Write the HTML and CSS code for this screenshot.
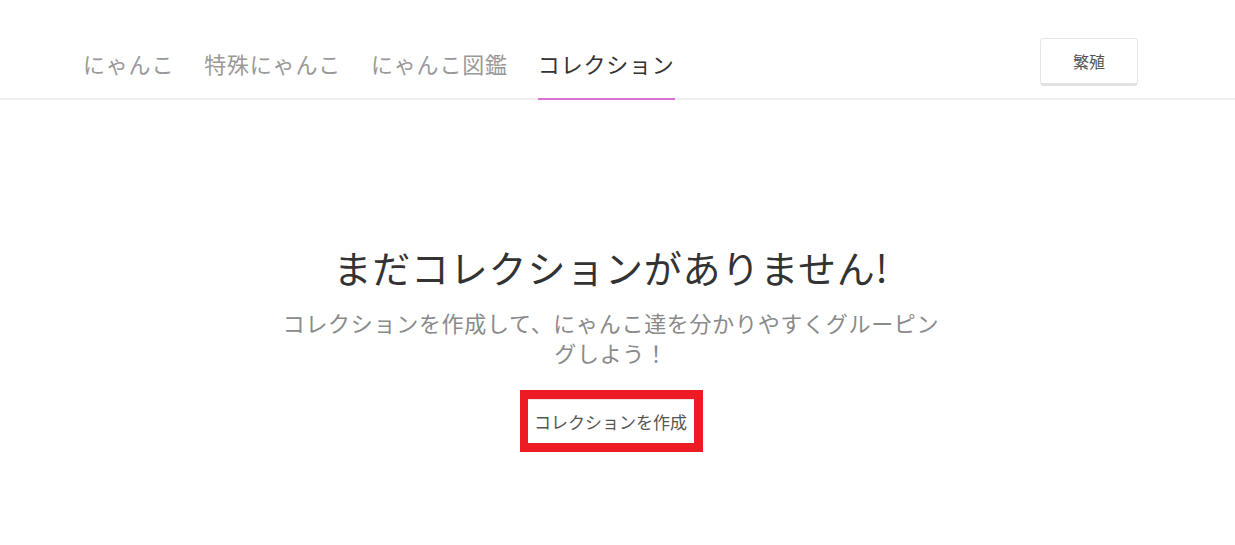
FILE: index.html
```html
<!DOCTYPE html>
<html lang="ja">
<head>
<meta charset="utf-8">
<title>コレクション</title>
<link rel="stylesheet" href="styles.css">
</head>
<body>
<header class="header">
  <div class="header-inner">
    <nav class="tabs">
      <a class="tab">にゃんこ</a>
      <a class="tab">特殊にゃんこ</a>
      <a class="tab">にゃんこ図鑑</a>
      <a class="tab tab-active">コレクション</a>
    </nav>
    <button class="breed-btn">繁殖</button>
  </div>
</header>
<main class="main">
  <h1 class="title">まだコレクションがありません!</h1>
  <p class="subtitle">コレクションを作成して、にゃんこ達を分かりやすくグルーピングしよう！</p>
  <div class="highlight">
    <button class="create-btn">コレクションを作成</button>
  </div>
</main>
</body>
</html>
```
FILE: styles.css
```css
* { box-sizing: border-box; }
html, body {
  margin: 0;
  padding: 0;
  background: #fff;
  font-family: "Noto Sans CJK JP", "Noto Sans", sans-serif;
}
.header {
  border-bottom: 2px solid #eeeeee;
}
.header-inner {
  display: flex;
  align-items: flex-end;
  height: 98px;
  padding: 0 97px 0 83px;
}
.tabs {
  display: flex;
  gap: 30px;
}
.tab {
  display: block;
  font-size: 22px;
  line-height: 30px;
  letter-spacing: 0.8px;
  padding-bottom: 20px;
  color: #999;
  border-bottom: 2px solid transparent;
  margin-bottom: -2px;
  white-space: nowrap;
}
.tab-active {
  color: #333;
  border-bottom-color: #da70d6;
}
.breed-btn {
  margin-left: auto;
  margin-bottom: 12px;
  width: 98px;
  height: 48px;
  background: #fff;
  border: 1px solid #e6e6e6;
  border-bottom: 3px solid #e2e2e2;
  border-radius: 4px;
  font-family: inherit;
  font-size: 16px;
  color: #555;
  padding: 0;
}
.main {
  display: flex;
  flex-direction: column;
  align-items: center;
  padding: 143px 97px 0 84px;
}
.title {
  margin: 0;
  font-size: 38px;
  line-height: 48px;
  letter-spacing: 0.8px;
  font-weight: 400;
  color: #333;
}
.subtitle {
  margin: 16px 0 0;
  max-width: 672px;
  text-align: center;
  font-size: 22px;
  line-height: 30px;
  letter-spacing: 0.7px;
  color: #8a8a8a;
}
.highlight {
  margin-top: 23px;
  border: 9px solid #ed1c24;
  border-left-width: 8px;
}
.create-btn {
  display: block;
  width: 166px;
  height: 44px;
  background: #fff;
  border: none;
  border-top: 1px solid #f3e0e0;
  font-family: inherit;
  font-size: 17px;
  color: #555;
  padding: 0;
}
```
